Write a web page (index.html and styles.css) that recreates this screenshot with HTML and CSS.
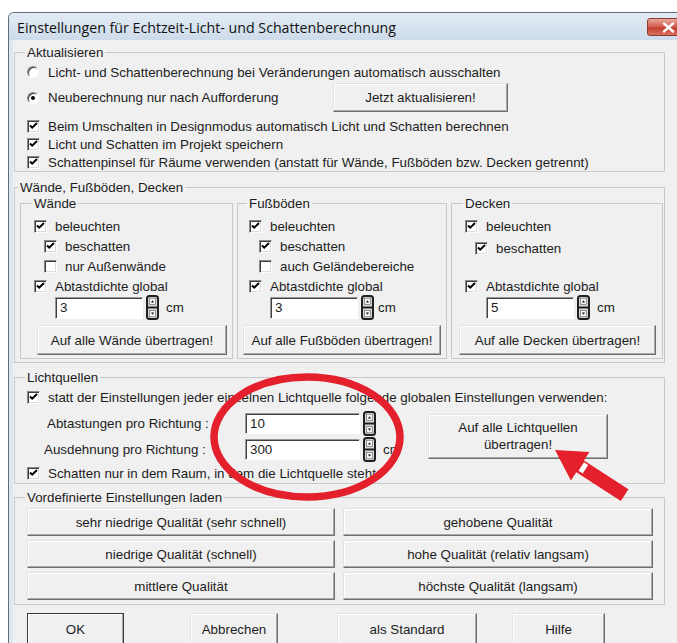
FILE: index.html
```html
<!DOCTYPE html>
<html lang="de">
<head>
<meta charset="utf-8">
<title>Einstellungen für Echtzeit-Licht- und Schattenberechnung</title>
<link rel="stylesheet" href="styles.css">
</head>
<body>
<div class="window">
  <div class="titlebar">
    <span class="title">Einstellungen für Echtzeit-Licht- und Schattenberechnung</span>
    <span class="close-btn"><svg width="13" height="11" viewBox="0 0 13 11"><path d="M2 1.5l9 8M11 1.5l-9 8" stroke="#fff" stroke-width="2.4" stroke-linecap="round"/></svg></span>
  </div>

  <div class="client">
    <fieldset class="group g-update">
      <legend>Aktualisieren</legend>
      <div class="row h20"><span class="rb"></span><span>Licht- und Schattenberechnung bei Veränderungen automatisch ausschalten</span></div>
      <div class="row h29 mt1"><span class="rb on"></span><span class="lbl-refresh">Neuberechnung nur nach Aufforderung</span><button class="btn btn-refresh">Jetzt aktualisieren!</button></div>
      <div class="row h18 mt5"><span class="cb on"><svg viewBox="0 0 11 11"><path d="M2 4.5l2.2 2.2L9 2" /></svg></span><span>Beim Umschalten in Designmodus automatisch Licht und Schatten berechnen</span></div>
      <div class="row h18"><span class="cb on"><svg viewBox="0 0 11 11"><path d="M2 4.5l2.2 2.2L9 2" /></svg></span><span>Licht und Schatten im Projekt speichern</span></div>
      <div class="row h18"><span class="cb on"><svg viewBox="0 0 11 11"><path d="M2 4.5l2.2 2.2L9 2" /></svg></span><span>Schattenpinsel für Räume verwenden (anstatt für Wände, Fußböden bzw. Decken getrennt)</span></div>
    </fieldset>

    <fieldset class="group g-surfaces">
      <legend>Wände, Fußböden, Decken</legend>
      <div class="surfaces">
        <fieldset class="sub sub-walls">
          <legend>Wände</legend>
          <div class="row h19"><span class="cb on"><svg viewBox="0 0 11 11"><path d="M2 4.5l2.2 2.2L9 2" /></svg></span><span>beleuchten</span></div>
          <div class="row h20 indent"><span class="cb on"><svg viewBox="0 0 11 11"><path d="M2 4.5l2.2 2.2L9 2" /></svg></span><span>beschatten</span></div>
          <div class="row h20 indent"><span class="cb"></span><span>nur Außenwände</span></div>
          <div class="row h20"><span class="cb on"><svg viewBox="0 0 11 11"><path d="M2 4.5l2.2 2.2L9 2" /></svg></span><span>Abtastdichte global</span></div>
          <div class="row h23 value-row">
            <span class="field">3</span>
            <svg class="spin" viewBox="0 0 13 25"><rect x="1" y="1" width="11" height="23" rx="2.5" fill="#dcdcdc" stroke="#1f1f1f" stroke-width="2"/><path d="M1 12.5h11" stroke="#1f1f1f" stroke-width="2"/><rect x="3.5" y="3.2" width="6" height="6.4" fill="#f7f7f7" stroke="#6a6a6a" stroke-width="0.7"/><rect x="3.5" y="15.4" width="6" height="6.4" fill="#f7f7f7" stroke="#6a6a6a" stroke-width="0.7"/><path d="M5 7.6h3L6.5 5.2z" fill="#111"/><path d="M5 17.4h3L6.5 19.8z" fill="#111"/></svg>
            <span class="unit">cm</span>
          </div>
          <button class="btn btn-apply w-walls">Auf alle Wände übertragen!</button>
        </fieldset>

        <fieldset class="sub sub-floors">
          <legend>Fußböden</legend>
          <div class="row h19"><span class="cb on"><svg viewBox="0 0 11 11"><path d="M2 4.5l2.2 2.2L9 2" /></svg></span><span>beleuchten</span></div>
          <div class="row h20 indent"><span class="cb on"><svg viewBox="0 0 11 11"><path d="M2 4.5l2.2 2.2L9 2" /></svg></span><span>beschatten</span></div>
          <div class="row h20 indent"><span class="cb"></span><span>auch Geländebereiche</span></div>
          <div class="row h20"><span class="cb on"><svg viewBox="0 0 11 11"><path d="M2 4.5l2.2 2.2L9 2" /></svg></span><span>Abtastdichte global</span></div>
          <div class="row h23 value-row">
            <span class="field">3</span>
            <svg class="spin" viewBox="0 0 13 25"><rect x="1" y="1" width="11" height="23" rx="2.5" fill="#dcdcdc" stroke="#1f1f1f" stroke-width="2"/><path d="M1 12.5h11" stroke="#1f1f1f" stroke-width="2"/><rect x="3.5" y="3.2" width="6" height="6.4" fill="#f7f7f7" stroke="#6a6a6a" stroke-width="0.7"/><rect x="3.5" y="15.4" width="6" height="6.4" fill="#f7f7f7" stroke="#6a6a6a" stroke-width="0.7"/><path d="M5 7.6h3L6.5 5.2z" fill="#111"/><path d="M5 17.4h3L6.5 19.8z" fill="#111"/></svg>
            <span class="unit unit-tight">cm</span>
          </div>
          <button class="btn btn-apply w-floors">Auf alle Fußböden übertragen!</button>
        </fieldset>

        <fieldset class="sub sub-ceilings">
          <legend>Decken</legend>
          <div class="row h19"><span class="cb on"><svg viewBox="0 0 11 11"><path d="M2 4.5l2.2 2.2L9 2" /></svg></span><span>beleuchten</span></div>
          <div class="row h24 indent"><span class="cb on"><svg viewBox="0 0 11 11"><path d="M2 4.5l2.2 2.2L9 2" /></svg></span><span>beschatten</span></div>
          <div class="row h16"></div>
          <div class="row h20"><span class="cb on"><svg viewBox="0 0 11 11"><path d="M2 4.5l2.2 2.2L9 2" /></svg></span><span>Abtastdichte global</span></div>
          <div class="row h23 value-row">
            <span class="field">5</span>
            <svg class="spin" viewBox="0 0 13 25"><rect x="1" y="1" width="11" height="23" rx="2.5" fill="#dcdcdc" stroke="#1f1f1f" stroke-width="2"/><path d="M1 12.5h11" stroke="#1f1f1f" stroke-width="2"/><rect x="3.5" y="3.2" width="6" height="6.4" fill="#f7f7f7" stroke="#6a6a6a" stroke-width="0.7"/><rect x="3.5" y="15.4" width="6" height="6.4" fill="#f7f7f7" stroke="#6a6a6a" stroke-width="0.7"/><path d="M5 7.6h3L6.5 5.2z" fill="#111"/><path d="M5 17.4h3L6.5 19.8z" fill="#111"/></svg>
            <span class="unit">cm</span>
          </div>
          <button class="btn btn-apply w-ceilings">Auf alle Decken übertragen!</button>
        </fieldset>
      </div>
    </fieldset>

    <fieldset class="group g-lights">
      <legend>Lichtquellen</legend>
      <div class="row h18"><span class="cb on"><svg viewBox="0 0 11 11"><path d="M2 4.5l2.2 2.2L9 2" /></svg></span><span>statt der Einstellungen jeder einzelnen Lichtquelle folgende globalen Einstellungen verwenden:</span></div>
      <div class="light-grid">
        <span class="glabel">Abtastungen pro Richtung :</span>
        <span class="field wide">10</span>
        <svg class="spin" viewBox="0 0 13 25"><rect x="1" y="1" width="11" height="23" rx="2.5" fill="#dcdcdc" stroke="#1f1f1f" stroke-width="2"/><path d="M1 12.5h11" stroke="#1f1f1f" stroke-width="2"/><rect x="3.5" y="3.2" width="6" height="6.4" fill="#f7f7f7" stroke="#6a6a6a" stroke-width="0.7"/><rect x="3.5" y="15.4" width="6" height="6.4" fill="#f7f7f7" stroke="#6a6a6a" stroke-width="0.7"/><path d="M5 7.6h3L6.5 5.2z" fill="#111"/><path d="M5 17.4h3L6.5 19.8z" fill="#111"/></svg>
        <span></span>
        <button class="btn btn-lights">Auf alle Lichtquellen<br>übertragen!</button>
        <span class="glabel shift">Ausdehnung pro Richtung :</span>
        <span class="field wide">300</span>
        <svg class="spin" viewBox="0 0 13 25"><rect x="1" y="1" width="11" height="23" rx="2.5" fill="#dcdcdc" stroke="#1f1f1f" stroke-width="2"/><path d="M1 12.5h11" stroke="#1f1f1f" stroke-width="2"/><rect x="3.5" y="3.2" width="6" height="6.4" fill="#f7f7f7" stroke="#6a6a6a" stroke-width="0.7"/><rect x="3.5" y="15.4" width="6" height="6.4" fill="#f7f7f7" stroke="#6a6a6a" stroke-width="0.7"/><path d="M5 7.6h3L6.5 5.2z" fill="#111"/><path d="M5 17.4h3L6.5 19.8z" fill="#111"/></svg>
        <span class="unit">cm</span>
      </div>
      <div class="row h18 mt2"><span class="cb on"><svg viewBox="0 0 11 11"><path d="M2 4.5l2.2 2.2L9 2" /></svg></span><span>Schatten nur in dem Raum, in dem die Lichtquelle steht</span></div>
    </fieldset>

    <fieldset class="group g-presets">
      <legend>Vordefinierte Einstellungen laden</legend>
      <div class="presets">
        <button class="btn">sehr niedrige Qualität (sehr schnell)</button>
        <button class="btn">gehobene Qualität</button>
        <button class="btn">niedrige Qualität (schnell)</button>
        <button class="btn">hohe Qualität (relativ langsam)</button>
        <button class="btn">mittlere Qualität</button>
        <button class="btn">höchste Qualität (langsam)</button>
      </div>
    </fieldset>

    <div class="actions">
      <button class="btn btn-ok">OK</button>
      <button class="btn btn-cancel">Abbrechen</button>
      <button class="btn btn-default">als Standard</button>
      <button class="btn btn-help">Hilfe</button>
    </div>
  </div>
</div>

<svg class="marks" width="677" height="643" viewBox="0 0 677 643">
  <ellipse cx="307" cy="437" rx="93" ry="60" fill="none" stroke="#e3202b" stroke-width="7.5"/>
  <g transform="translate(555 450) rotate(33)">
    <polygon points="0,0 30,-17 30,-7 83,-7 83,7 30,7 30,17" fill="#e3202b"/>
    <rect x="31" y="-5.5" width="5" height="10" fill="#fff"/>
  </g>
</svg>
</body>
</html>
```

FILE: styles.css
```css
html, body {
  margin: 0;
  padding: 0;
}

body {
  position: relative;
  width: 677px;
  height: 643px;
  overflow: hidden;
  background: #fff;
  font-family: "Liberation Sans", Arial, sans-serif;
  font-size: 13.35px;
  color: #1c1c1c;
}

/* dialog frame */
.window {
  margin: 12px 0 0 8px;
  width: 686px;
  border: 1px solid #5f6c7a;
  border-bottom: none;
  border-radius: 6px 6px 0 0;
  background: #dfe8f1;
}

.titlebar {
  height: 27px;
  display: flex;
  align-items: flex-start;
  justify-content: space-between;
  background: linear-gradient(#e3ecf5, #cddbea);
  border-radius: 5px 5px 0 0;
}

.title {
  margin: 5px 0 0 8px;
  font-family: "Open Sans", "Noto Sans", sans-serif;
  font-size: 14.2px;
  line-height: 20px;
  color: #111;
}

.close-btn {
  width: 43px;
  height: 18px;
  margin: 5px 5px 0 0;
  box-sizing: border-box;
  border: 1px solid #8c3b33;
  border-radius: 3px;
  background: linear-gradient(#e9a99c, #d2594a 50%, #c23f2f 55%, #d9725f);
  display: flex;
  align-items: center;
  justify-content: center;
}

.client {
  margin-left: 4px;
  padding: 5px 0 0 1px;
  height: 620px;
  background: #f0f0f0;
}

/* group boxes */
.group,
.sub {
  margin: 0;
  border: 1px solid #c9c9c9;
  box-sizing: border-box;
  min-width: 0;
}

.group {
  width: 651px;
  padding: 0 0 0 12px;
}

.group > legend,
.sub > legend {
  padding: 0 2px;
  margin-left: -2px;
  line-height: 15px;
}

.g-update { margin-top: 0; padding-top: 2px; }
.g-surfaces { margin-top: 8px; padding: 1px 0 3px 5px; }
.g-lights { margin-top: 7px; padding-top: 3px; padding-bottom: 1px; }
.g-presets { margin-top: 6px; padding-top: 3px; padding-bottom: 4px; }

/* rows */
.row {
  display: flex;
  align-items: center;
  white-space: nowrap;
}

.h16 { height: 16px; }
.h18 { height: 18px; }
.h19 { height: 19px; }
.h20 { height: 20px; }
.h23 { height: 23px; }
.h24 { height: 24px; }
.h29 { height: 29px; }
.mt1 { margin-top: 1px; }
.mt2 { margin-top: 2px; }
.mt5 { margin-top: 5px; }

.indent { padding-left: 10px; }

/* checkbox */
.cb {
  flex: none;
  width: 13px;
  height: 13px;
  margin-right: 8px;
  box-sizing: border-box;
  border: 1px solid;
  border-color: #8a8a8a #fdfdfd #fdfdfd #8a8a8a;
  box-shadow: inset 1px 1px 0 #3c3c3c, inset -1px -1px 0 #dcdcdc;
  background: #fff;
}

.cb svg {
  display: block;
  width: 11px;
  height: 11px;
}

.cb path {
  fill: none;
  stroke: #000;
  stroke-width: 2;
}

/* radio button */
.rb {
  flex: none;
  position: relative;
  width: 12px;
  height: 12px;
  margin-right: 9px;
  box-sizing: border-box;
  border-radius: 50%;
  border: 1px solid;
  border-color: #8a8a8a #fdfdfd #fdfdfd #8a8a8a;
  box-shadow: inset 1px 1px 0 #3c3c3c;
  background: #fff;
}

.rb.on::after {
  content: "";
  position: absolute;
  left: 3px;
  top: 3px;
  width: 4px;
  height: 4px;
  border-radius: 50%;
  background: #000;
}

.lbl-refresh { width: 285px; }

/* push buttons */
.btn {
  font: inherit;
  color: #1c1c1c;
  background: #f0f0f0;
  padding: 0;
  margin: 0;
  box-sizing: border-box;
  border: 1px solid;
  border-color: #e2e2e2 #6f6f6f #6f6f6f #e2e2e2;
  box-shadow: inset -1px -1px 0 #a9a9a9, inset 1px 1px 0 #fff;
  white-space: nowrap;
}

.btn-refresh { width: 175px; height: 29px; }

/* walls / floors / ceilings */
.surfaces {
  display: flex;
  gap: 4px;
}

.sub {
  padding: 6px 0 3px 13px;
}

.sub-walls { width: 213px; }
.sub-floors { width: 210px; padding-left: 11px; }
.sub-ceilings { width: 212px; }

.value-row { padding-left: 21px; }

.field {
  display: flex;
  align-items: center;
  width: 88px;
  height: 22px;
  padding-left: 4px;
  box-sizing: border-box;
  background: #fff;
  border: 1px solid;
  border-color: #9a9a9a #fff #fff #9a9a9a;
  box-shadow: inset 1px 1px 0 #404040;
}

.spin {
  flex: none;
  width: 13px;
  height: 25px;
  margin-left: 3px;
}

.unit { margin-left: 7px; }
.unit-tight { margin-left: 4px; }

.btn-apply {
  display: block;
  height: 30px;
  margin-top: 6px;
}

.w-walls { width: 190px; margin-left: 3px; }
.w-floors { width: 198px; margin-left: -6px; }
.w-ceilings { width: 197px; margin-left: -6px; }

/* light sources */
.light-grid {
  display: grid;
  grid-template-columns: 198px 115px 17px 51px 180px;
  grid-template-rows: 26px 26px;
  align-items: center;
  margin: 4px 0 0 20px;
  white-space: nowrap;
}

.glabel.shift { margin-left: -3px; }

.field.wide { width: 115px; height: 21px; }

.light-grid .spin { margin-left: 3px; }
.light-grid .unit { margin-left: 6px; }

.btn-lights {
  grid-row: 1 / span 2;
  grid-column: 5;
  height: 45px;
  line-height: 17px;
  white-space: normal;
}

/* presets */
.presets {
  display: grid;
  grid-template-columns: 308px 310px;
  grid-auto-rows: 28px;
  column-gap: 8px;
  row-gap: 4px;
}

/* dialog buttons */
.actions {
  display: flex;
  margin-top: 8px;
  padding-left: 13px;
}

.actions .btn { height: 32px; }
.btn-ok { width: 97px; outline: 1px solid #3a3a3a; outline-offset: -1px; }
.btn-cancel { width: 88px; margin-left: 66px; }
.btn-default { width: 140px; margin-left: 59px; }
.btn-help { width: 93px; margin-left: 35px; }

/* red annotation overlay */
.marks {
  position: absolute;
  left: 0;
  top: 0;
  pointer-events: none;
}
```
